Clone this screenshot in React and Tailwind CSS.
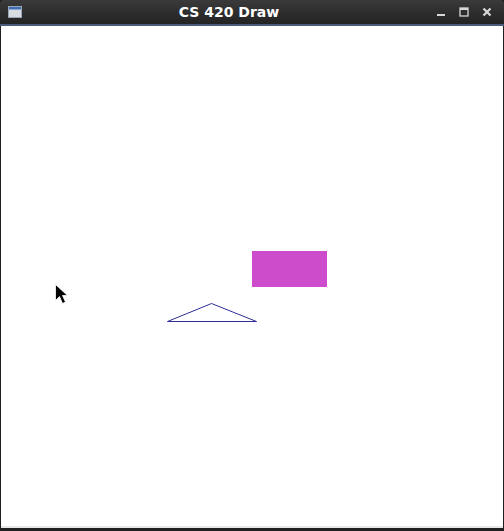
import React from "react";

const TitleBar = () => (
  <div className="h-[26px] shrink-0 flex items-center px-2 bg-gradient-to-b from-[#3a3a3a] to-[#232323] border-b-2 border-[#4a5a7a] rounded-t-[4px]">
    <svg width="14" height="12" viewBox="0 0 14 12" className="shrink-0">
      <rect x="0.5" y="0.5" width="13" height="11" fill="#d8dde4" stroke="#9aa6b8" />
      <rect x="1" y="1" width="12" height="2.5" fill="#3e6fb4" />
    </svg>
    <div className="flex-1 text-center text-white font-bold text-[14px] leading-none font-['DejaVu_Sans',sans-serif]">
      CS 420 Draw
    </div>
    <div className="flex items-center gap-[13px] pr-[4px] text-[#d8d8d8]">
      <svg width="10" height="10" viewBox="0 0 10 10">
        <rect x="1" y="7" width="8" height="2" fill="#d8d8d8" />
      </svg>
      <svg width="10" height="10" viewBox="0 0 10 10">
        <rect x="1" y="1" width="8" height="8" fill="none" stroke="#d8d8d8" strokeWidth="1.3" />
        <rect x="1" y="1" width="8" height="2" fill="#d8d8d8" />
      </svg>
      <svg width="10" height="10" viewBox="0 0 10 10">
        <path d="M1.5 1.5 L8.5 8.5 M8.5 1.5 L1.5 8.5" stroke="#d8d8d8" strokeWidth="2.2" />
      </svg>
    </div>
  </div>
);

const Canvas = () => (
  <div className="flex-1 relative bg-white border-x border-[#1e1e1e] border-b-[4px] border-b-[#202020]">
    <div className="h-full border-b-2 border-[#e8e8e8]">
      <svg width="502" height="500" viewBox="0 0 502 500" className="block">
        <rect x="251" y="225" width="75" height="36" fill="#cc4ccc" />
        <polygon points="166.5,295.5 210.5,277.5 255.5,295.5" fill="none" stroke="#2e2e96" strokeWidth="1" />
        <path
          d="M54.5 258.5 L54.5 274.5 L58.5 270.5 L61.5 277.5 L64.5 276 L61.5 269.5 L66.5 269.5 Z"
          fill="#000"
          stroke="#fff"
          strokeWidth="0.8"
        />
      </svg>
    </div>
  </div>
);

export default function App() {
  return (
    <div className="w-[504px] h-[531px] flex flex-col bg-[#1e1e1e]">
      <TitleBar />
      <Canvas />
    </div>
  );
}
